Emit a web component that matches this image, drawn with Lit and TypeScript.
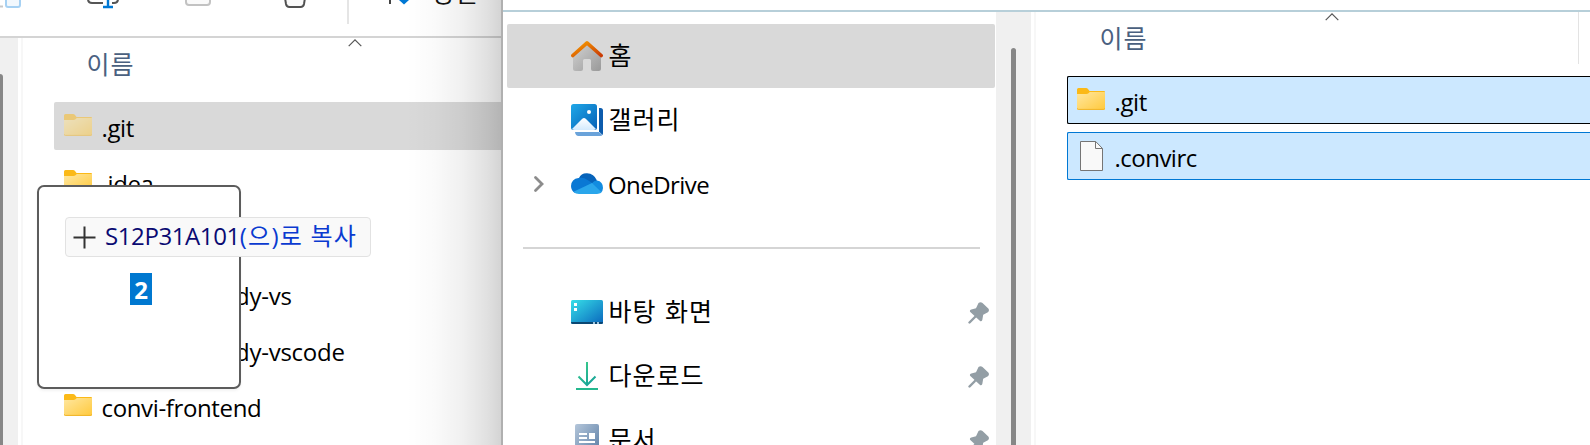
import { LitElement, html, css, svg, nothing } from "lit";
import { customElement, property } from "lit/decorators.js";

const folder = html`<svg class="folder" width="28" height="22" viewBox="0 0 28 22">
  <defs><linearGradient id="f" x1="0" y1="0" x2="1" y2="1"><stop offset="0" stop-color="#ffe7a0"/><stop offset="1" stop-color="#ffc93c"/></linearGradient></defs>
  <path d="M0 1.5Q0 0 1.5 0H9q1.3 0 2 1l1.500 2H27q1 0 1 1v3H0z" fill="#fbb917"/>
  <path d="M0 6h9.500q1.200 0 2-.8l1.300-1.200H28v16.500Q28 22 26.500 22h-25Q0 22 0 20.500z" fill="url(#f)"/>
  <path d="M0 20.200Q.3 21.400 1.500 21.400h25q1.200 0 1.500-1.200" fill="none" stroke="#f0b429" stroke-width="1"/>
</svg>`;

const file = html`<svg class="file" width="23" height="30" viewBox="0 0 23 30">
  <path d="M.5.5h15.200l6.800 7v22H.5z" fill="#f9f9f9" stroke="#757575"/>
  <path d="M15.500.5v7h7" fill="none" stroke="#757575"/>
</svg>`;

const icons: Record<string, unknown> = {
  home: svg`<defs>
      <linearGradient id="hb" x1="0" y1="0" x2="1" y2="1"><stop offset="0" stop-color="#d4d4d4"/><stop offset="1" stop-color="#999"/></linearGradient>
      <linearGradient id="hr" x1="0" y1="0" x2="1" y2="1"><stop offset="0" stop-color="#f9a000"/><stop offset="1" stop-color="#c93a05"/></linearGradient></defs>
    <path d="M2 14L16 2l14 12v14.500q0 2.500-2.500 2.500H22q-2 0-2-2V20.500q0-1.500-1.500-1.500h-5q-1.500 0-1.500 1.500V29q0 2-2 2H4.500Q2 31 2 28.500z" fill="url(#hb)"/>
    <path d="M1.800 15.500L16 2.800l14.200 12.700" fill="none" stroke="url(#hr)" stroke-width="3.600" stroke-linecap="round" stroke-linejoin="round"/>`,
  gallery: svg`<defs>
      <linearGradient id="ga" x1="0" y1="0" x2="1" y2="1"><stop offset="0" stop-color="#1fa8e8"/><stop offset="1" stop-color="#0560b6"/></linearGradient>
      <linearGradient id="gm" x1="0" y1="0" x2="0" y2="1"><stop offset="0" stop-color="#fff"/><stop offset="1" stop-color="#d3eafd"/></linearGradient></defs>
    <path d="M28 4h1.500Q32 4 32 6.500V29q0 1.500-.6 2L28 27.500z" fill="#0d5cad"/>
    <path d="M4 28h24l3.400 3Q31 32 29 32H7.500Q4.500 32 4 28z" fill="#6aa3da"/>
    <rect width="26" height="26" rx="2.500" fill="url(#ga)"/>
    <path d="M1 25L11 15q2-2 4 0l10 10q-1 1-2.500 1h-19Q2 26 1 25z" fill="url(#gm)"/>
    <circle cx="18" cy="8" r="2" fill="#fff"/>`,
  onedrive: svg`<path d="M8 10Q10 5 16 5.200q7 .2 10 7.300L18 18z" fill="#0663ba"/>
    <path d="M7.500 10q5-1.300 9 2l5 3.200L4 25Q0 22.500 0 18q.4-7.200 7.500-8z" fill="#0a78d4"/>
    <path d="M21 15.200q1.700-2.800 5-2.800 6 1 6 7.600 0 3.200-2.500 5.200L16 18z" fill="#128ce0"/>
    <path d="M2.500 23.700L21 15l9.500 9.200q-1.800 1.800-4.500 1.800H8q-3.500 0-5.500-2.300z" fill="#2aa6eb"/>`,
  desktop: svg`<defs><linearGradient id="d" x1="0" y1="0" x2="1" y2="1"><stop offset="0" stop-color="#36dfe8"/><stop offset="1" stop-color="#0a67bd"/></linearGradient></defs>
    <rect y="4" width="32" height="24" rx="1.500" fill="url(#d)"/>
    <path d="M0 26h32q0 2-1.500 2h-29Q0 28 0 26z" fill="#0b4772"/>
    <path d="M3 7h3v3H3zM3 12h3v3H3z" fill="#fff"/><path d="M22 26h2v2h-2zM26 26h2v2h-2z" fill="#9fc4dd"/>`,
  download: svg`<defs><linearGradient id="dl" gradientUnits="userSpaceOnUse" x1="6" y1="3" x2="24" y2="28"><stop offset="0" stop-color="#3ed08a"/><stop offset="1" stop-color="#0d9a9a"/></linearGradient></defs>
    <path d="M16 2v23M7.500 16.500L16 25l8.500-8.500" fill="none" stroke="url(#dl)" stroke-width="2"/>
    <path d="M5 29h22" stroke="#24b88e" stroke-width="2"/>`,
  document: svg`<defs><linearGradient id="dc" x1="0" y1="0" x2="1" y2="1"><stop offset="0" stop-color="#b4c6da"/><stop offset="1" stop-color="#587ba3"/></linearGradient></defs>
    <rect x="4" width="24" height="32" rx="2" fill="url(#dc)"/>
    <path d="M8 9h8v2H8zM8 13h8v2H8zM18 9h6v6h-6zM8 17h16v2H8z" fill="#fff"/>`,
};

const pin = html`<svg class="pin" width="22" height="22" viewBox="0 0 22 22">
  <path d="M10.500 1q2-1.500 4 0l5.800 5.600q1.500 2-.4 3.600l-4.700 2.600-.9 5.200q-.9 2.200-2.500.8L2.300 10q-1.200-1.700 1-2.500L8 6.200z" fill="#939ea5"/>
  <path d="M7.500 14.500L1.500 20.500" stroke="#939ea5" stroke-width="2.400" stroke-linecap="round"/>
</svg>`;

const caret = html`<svg class="caret" width="14" height="8" viewBox="0 0 14 8"><path d="M.7 7.200L7 .9l6.300 6.300" fill="none" stroke="#555" stroke-width="1.200"/></svg>`;

const base = css`
  * { box-sizing: border-box; }
  svg { display: block; flex: none; }
`;

@customElement("file-row")
class FileRow extends LitElement {
  @property() label = "";
  @property() kind = "folder";
  @property() state = "";
  static styles = [base, css`
    :host { display: block; height: 48px; flex: none; }
    .row { display: flex; height: 48px; padding-left: 10px; border-radius: 2px 0 0 2px; }
    .hover { background: #d9d9d9; }
    .hover .icon { opacity: .5; }
    .focused, .selected { background: #cce8ff; box-shadow: inset 1px 0 #0078d4, inset 0 1px #0078d4, inset 0 -1px #0078d4; }
    .focused { box-shadow: inset 1px 0 #000, inset 0 1px #000, inset 0 -1px #000; }
    .icon { width: 37.500px; padding-top: 12px; flex: none; }
    .file { margin: -3px 0 0 3px; }
    .text { font: 24px/34px "Open Sans", "Noto Sans CJK KR", sans-serif; padding-top: 9px; white-space: nowrap; letter-spacing: -.36px; }
    .selected .text { letter-spacing: -.52px; }
    .tail { padding-left: 133.500px; letter-spacing: -.26px; }
  `];
  render() {
    return html`<div class="row ${this.state}">
      <div class="icon">${this.kind === "folder" ? folder : this.kind === "file" ? file : nothing}</div>
      <div class="text ${this.kind === "tail" ? "tail" : ""}">${this.label}</div>
    </div>`;
  }
}

@customElement("nav-row")
class NavRow extends LitElement {
  @property() label = "";
  @property() icon = "";
  @property({ type: Boolean }) active = false;
  @property({ type: Boolean }) pinned = false;
  @property({ type: Boolean }) branch = false;
  static styles = [base, css`
    :host { display: block; height: 64px; flex: none; }
    .row { display: flex; align-items: center; height: 64px; margin: 0 1px 0 4px; padding-right: 5px; border-radius: 2px; }
    .active { background: #d9d9d9; }
    .toggle { width: 64px; padding-left: 24px; flex: none; }
    .text { flex: 1; margin-left: 5px; padding-top: 2px; font: 24px/34px "Open Sans", "Noto Sans CJK KR", sans-serif; letter-spacing: -.55px; white-space: nowrap; }
    .ko { font-size: 25px; letter-spacing: 1px; word-spacing: 1px; padding: 0 0 2px; margin-left: 5.500px; }
    .pin { margin-top: 1px; }
  `];
  render() {
    return html`<div class="row ${this.active ? "active" : ""}">
      <div class="toggle">${this.branch ? html`<svg width="14" height="18" viewBox="0 0 14 18"><path d="M4.500 2.500L11 9l-6.500 6.500" fill="none" stroke="#8c8c8c" stroke-width="2.800" stroke-linecap="round"/></svg>` : nothing}</div>
      <svg width="32" height="32" viewBox="0 0 32 32">${icons[this.icon]}</svg>
      <div class="text ${this.icon === "onedrive" ? "" : "ko"}">${this.label}</div>
      ${this.pinned ? pin : nothing}
    </div>`;
  }
}

@customElement("app-root")
class AppRoot extends LitElement {
  static styles = [base, css`
    :host { display: block; }
    .desk { position: relative; display: flex; width: 1590px; height: 445px; overflow: hidden; background: #fff; font-family: "Open Sans", "Noto Sans CJK KR", sans-serif; }
    .back { width: 501px; flex: none; display: flex; flex-direction: column; position: relative; }
    .shade { position: absolute; inset: 0 0 0 auto; width: 95px; background: linear-gradient(90deg, rgba(0,0,0,0), rgba(0,0,0,.018) 30%, rgba(0,0,0,.06) 60%, rgba(0,0,0,.12) 86%, rgba(0,0,0,.17)); }
    .tools { height: 38px; flex: none; border-bottom: 2px solid #d4d4d4; overflow: hidden; }
    .body { flex: 1; display: flex; min-height: 0; }
    .rail { width: 18px; background: #f0f0f0; flex: none; padding-top: 36px; }
    .thumb { width: 3px; height: 400px; background: #878787; border-radius: 0 3px 0 0; }
    .split { width: 5px; border-right: 2px solid #f7f7f7; flex: none; }
    .list { flex: 1; padding-left: 31px; min-width: 0; }
    .head { display: flex; color: #4a6080; font: 25px/36px "Noto Sans CJK KR", sans-serif; letter-spacing: 1px; padding-left: 32.500px; position: relative; }
    .back .head { height: 64px; padding-top: 7px; }
    .rows { display: flex; flex-direction: column; gap: 8px; }
    .caret { position: absolute; top: 1px; left: 294px; }
    .front { flex: 1; min-width: 0; display: flex; flex-direction: column; background: #fff; border-left: 2px solid #b0b0b0; }
    .cap { height: 12px; flex: none; border-bottom: 2px solid #b7cfd9; }
    .nav { width: 493px; flex: none; padding-top: 12px; }
    .rule { height: 2px; background: #d5d5d5; margin: 31px 16px 31px 20px; }
    .scroll { width: 35px; flex: none; background: #f0f0f0; padding: 36px 0 0 15px; }
    .bar { width: 5px; height: 400px; background: #878787; border-radius: 3px; }
    .front .head { height: 64px; padding-top: 7px; }
    .front .caret { left: 258px; }
    .col { position: absolute; left: 511px; top: 0; width: 1px; height: 52px; background: #e3e3e3; }
    .ghost { position: absolute; left: 37px; top: 185px; width: 204px; height: 204px; background: #fff; border: 2px solid #5c5c5c; border-radius: 7px; box-shadow: 0 2px 3px rgba(0,0,0,.05); }
    .count { position: absolute; left: 130px; top: 273px; width: 22px; height: 32px; background: #0078d0; color: #fff; font: bold 24px/34px "Open Sans", sans-serif; text-align: center; }
    .tip { position: absolute; left: 65px; top: 217px; width: 306px; height: 40px; display: flex; align-items: center; padding-left: 7px; gap: 9px; background: #f9f9f9; border: 1px solid #e2e2e2; border-radius: 4px; color: #0a3ad0; white-space: nowrap; }
    .where { font: 24px/36px "Open Sans", "Noto Sans CJK KR", sans-serif; padding-bottom: 2px; }
    .target { color: #0a0a72; letter-spacing: -.4px; }
    .verb { letter-spacing: 1.200px; }
  `];
  render() {
    return html`<div class="desk">
      <div class="back">
        <div class="tools">
          <svg width="501" height="36" viewBox="0 0 501 36" fill="none">
            <path d="M0 6.500h3" stroke="#c8c8c8" stroke-width="2"/>
            <path d="M6 -3V5q0 2 2 2h10q2 0 2-2V-3" fill="#f2f8fd" stroke="#a6d1f3" stroke-width="2"/>
            <path d="M88 -2v1q0 4 4 4h11M112 3h2q4 0 4-4" stroke="#555" stroke-width="2"/>
            <path d="M108 -2V6.500M103 7h10" stroke="#0078d4" stroke-width="2.400"/>
            <path d="M186 -2V2q0 3 3 3h18q3 0 3-3V-2" stroke="#c2c2c2" stroke-width="2" fill="#fafafa"/>
            <path d="M285 -2l1 6q.6 3 3.500 3h11q2.900 0 3.500-3l1-6" stroke="#505050" stroke-width="2" fill="#fafafa"/>
            <path d="M348 0V24" stroke="#e5e5e5" stroke-width="2"/>
            <path d="M390 0v4" stroke="#444" stroke-width="2"/>
            <path d="M399 0h10l-5 4.500z" fill="#0078d4"/>
            <text x="431" y="2" font-size="25" letter-spacing="0.500" fill="#111" font-family="Noto Sans CJK KR">정렬</text>
          </svg>
        </div>
        <div class="body">
          <div class="rail"><div class="thumb"></div></div>
          <div class="split"></div>
          <div class="list">
            <div class="head">이름${caret}</div>
            <div class="rows">
              <file-row label=".git" state="hover"></file-row>
              <file-row label=".idea"></file-row>
              <file-row kind="none"></file-row>
              <file-row label="dy-vs" kind="tail"></file-row>
              <file-row label="dy-vscode" kind="tail"></file-row>
              <file-row label="convi-frontend"></file-row>
            </div>
          </div>
        </div>
        <div class="shade"></div>
      </div>
      <div class="front">
        <div class="cap"></div>
        <div class="body">
          <div class="nav">
            <nav-row icon="home" label="홈" active></nav-row>
            <nav-row icon="gallery" label="갤러리"></nav-row>
            <nav-row icon="onedrive" label="OneDrive" branch></nav-row>
            <div class="rule"></div>
            <nav-row icon="desktop" label="바탕 화면" pinned></nav-row>
            <nav-row icon="download" label="다운로드" pinned></nav-row>
            <nav-row icon="document" label="문서" pinned></nav-row>
          </div>
          <div class="scroll"><div class="bar"></div></div>
          <div class="split"></div>
          <div class="list">
            <div class="head">이름${caret}<i class="col"></i></div>
            <div class="rows">
              <file-row label=".git" state="focused"></file-row>
              <file-row label=".convirc" kind="file" state="selected"></file-row>
            </div>
          </div>
        </div>
      </div>
      <div class="ghost"></div>
      <div class="count">2</div>
      <div class="tip">
        <svg width="23" height="23" viewBox="0 0 23 23"><path d="M11.500 .5v22M.5 11.500h22" stroke="#333" stroke-width="2"/></svg>
        <span class="where"><span class="target">S12P31A101</span><span class="verb">(으)로 복사</span></span>
      </div>
    </div>`;
  }
}
